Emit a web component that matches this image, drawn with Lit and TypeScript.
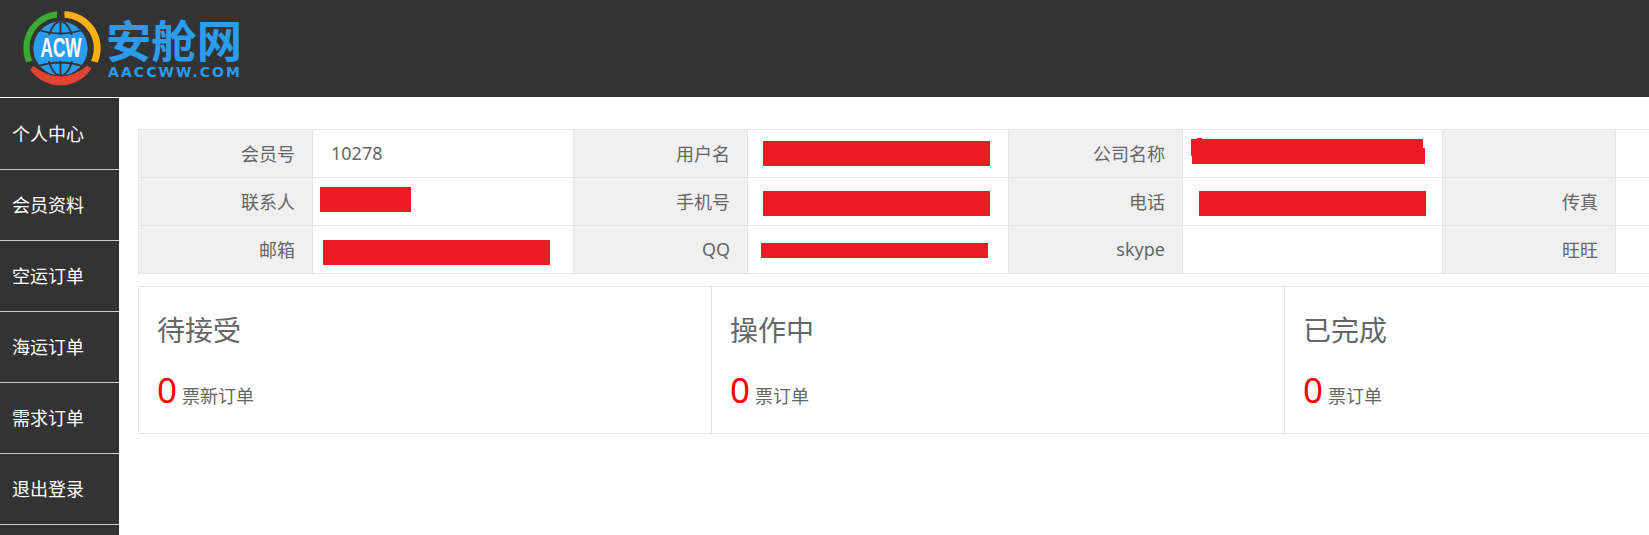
import { LitElement, html, css, svg } from "lit";
import { customElement } from "lit/decorators.js";

const NAV = ["个人中心", "会员资料", "空运订单", "海运订单", "需求订单", "退出登录"];
const COLS = [174, 261, 174, 261, 174, 260, 173, 261];
const ROWS = [
  [["会员号", "10278"], ["用户名", ""], ["公司名称", ""], ["", ""]],
  [["联系人", ""], ["手机号", ""], ["电话", ""], ["传真", ""]],
  [["邮箱", ""], ["QQ", ""], ["skype", ""], ["旺旺", ""]],
];
const STATS = [
  ["待接受", "票新订单"],
  ["操作中", "票订单"],
  ["已完成", "票订单"],
];
// Redaction blocks that lie over the table: x, y, w, h relative to the table's top-left corner
const REDACT = [
  [182, 58, 91, 25], [185, 111, 227, 25], [625, 12, 227, 25], [625, 62, 227, 25],
  [623, 114, 227, 15], [1053, 10, 232, 17], [1054, 19, 233, 16], [1059, 9, 5, 4], [1061, 62, 227, 25],
];

const logo = svg`
  <svg class="logo" width="260" height="97" viewBox="0 0 260 97">
    <defs><clipPath id="g"><circle cx="60.5" cy="48.5" r="27"/></clipPath></defs>
    <circle cx="60.5" cy="48.5" r="27" fill="#2a9df0"/>
    <g clip-path="url(#g)" fill="none" stroke="#333" stroke-width="1.8">
      <ellipse cx="60.5" cy="48.5" rx="13" ry="27"/>
      <path d="M60.5 20V76M36 29Q60.5 38 85 29M36 67Q60.5 58 85 67"/>
    </g>
    <rect x="33" y="35" width="55" height="26" fill="#2a9df0" clip-path="url(#g)"/>
    <text x="61" y="57" text-anchor="middle" class="acw" textLength="41" lengthAdjust="spacingAndGlyphs">ACW</text>
    <path d="M57 11.2A37 37 0 0 0 26.3 62.5L32.4 60.5A30 30 0 0 1 57 17.8Z" fill="#3aaa35"/>
    <path d="M64.5 11.2A37 37 0 0 1 97.8 62.5L91 61A30.5 30.5 0 0 0 64.5 17.8Z" fill="#fbb016"/>
    <path d="M30 69.5A37 37 0 0 0 91.5 68.5L87.5 65.5Q60.5 87 33.5 66Z" fill="#e0432f"/>
    <text x="106" y="58" class="cn" textLength="136" lengthAdjust="spacingAndGlyphs">安舱网</text>
    <text x="108" y="77" class="en" textLength="132" lengthAdjust="spacing">AACCWW.COM</text>
  </svg>`;

@customElement("app-root")
export class AppRoot extends LitElement {
  static styles = css`
    :host {
      display: block;
      width: 100%;
      height: 100vh;
      overflow: hidden;
      background: #fff;
      font-family: "Noto Sans", "Noto Sans CJK SC", sans-serif;
      color: #666;
    }
    .top {
      height: 97px;
      background: #333;
      margin-bottom: 1px;
    }
    .logo { display: block; }
    .logo .acw { font: bold 27px "Liberation Sans", sans-serif; fill: #fff; }
    .logo .cn { font: bold 44px "Noto Sans CJK SC", sans-serif; fill: #2a9df0; }
    .logo .en { font: bold 14px "DejaVu Sans", sans-serif; fill: #2a9df0; }
    .body { display: flex; height: calc(100vh - 98px); }
    .nav {
      flex: 0 0 119px;
      background: #333;
      padding-top: 1px;
    }
    .nav div {
      height: 70px;
      line-height: 68px;
      border-bottom: 1px solid #ccc;
      padding-left: 12px;
      color: #fff;
      font-size: 18px;
      font-family: "Noto Sans CJK SC", sans-serif;
    }
    .main {
      flex: 0 0 auto;
      width: 1738px;
      padding: 31px 0 0 19px;
    }
    .wrap { position: relative; }
    table {
      border-collapse: collapse;
      table-layout: fixed;
      width: 1738px;
      font-size: 18px;
    }
    td {
      height: 48px;
      padding: 0 0 2px;
      border: 1px solid #e5e5e5;
      box-sizing: border-box;
    }
    td.l {
      background: #f0f0f0;
      text-align: right;
      padding-right: 17px;
    }
    td.v {
      padding-left: 18px;
    }
    .red { position: absolute; background: #ed1c24; }
    .stats {
      display: flex;
      width: 1720px;
      height: 148px;
      margin-top: 12px;
      border: 1px solid #e5e5e5;
      box-sizing: border-box;
    }
    .stat {
      flex: 1;
      padding: 23px 0 0 18px;
      border-right: 1px solid #e5e5e5;
    }
    .stat:last-child { border-right: 0; }
    .title { font-size: 28px; line-height: 40px; }
    .line { margin-top: 15px; display: flex; align-items: baseline; gap: 5px; font-size: 18px; line-height: 50px; }
    .num { color: #f00; font-size: 35px; }
  `;

  render() {
    return html`
      <div class="top">${logo}</div>
      <div class="body">
        <div class="nav">${NAV.map((n) => html`<div>${n}</div>`)}</div>
        <div class="main">
          <div class="wrap">
            <table>
              <colgroup>${COLS.map((w) => html`<col style="width:${w}px" />`)}</colgroup>
              ${ROWS.map(
                (r) => html`<tr>
                  ${r.map((c) => html`<td class="l">${c[0]}</td><td class="v">${c[1]}</td>`)}
                </tr>`
              )}
            </table>
            ${REDACT.map(
              (b) => html`<div class="red" style="left:${b[0]}px;top:${b[1]}px;width:${b[2]}px;height:${b[3]}px"></div>`
            )}
          </div>
          <div class="stats">
            ${STATS.map(
              (s) => html`<div class="stat">
                <div class="title">${s[0]}</div>
                <div class="line"><span class="num">0</span><span>${s[1]}</span></div>
              </div>`
            )}
          </div>
        </div>
      </div>
    `;
  }
}
